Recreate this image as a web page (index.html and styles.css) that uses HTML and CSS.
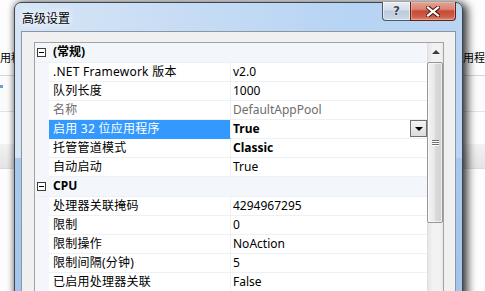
FILE: index.html
```html
<!DOCTYPE html>
<html lang="zh-CN">
<head>
<meta charset="utf-8">
<title>高级设置</title>
<link rel="stylesheet" href="styles.css">
</head>
<body>
<div class="desktop">
  <div class="bgapp">
    <div class="bg-head"><span class="bg-left">用程</span><span class="bg-right">用程</span></div>
    <div class="bg-tool"><span class="bg-dot"></span></div>
    <div class="bg-gap"></div>
    <div class="bg-band"></div>
  </div>

  <div class="window">
    <div class="titlebar">
      <span class="title">高级设置</span>
      <div class="caption">
        <div class="cbtn help"><span class="qmark">?</span></div>
        <div class="cbtn close">
          <svg width="14" height="11" viewBox="0 0 14 11">
            <path d="M2 1.5 L12 9.5 M12 1.5 L2 9.5" stroke="#4a1a12" stroke-width="4.2" stroke-linecap="square"/>
            <path d="M2 1.5 L12 9.5 M12 1.5 L2 9.5" stroke="#ffffff" stroke-width="2.2" stroke-linecap="square"/>
          </svg>
        </div>
      </div>
    </div>
    <div class="client">
      <div class="pgrid">
        <div class="rows">
          <div class="cat first"><span class="gut"><span class="box"></span></span><span class="cname">(常规)</span></div>
          <div class="row"><span class="gut"></span><span class="name">.NET Framework 版本</span><span class="val">v2.0</span></div>
          <div class="row"><span class="gut"></span><span class="name">队列长度</span><span class="val">1000</span></div>
          <div class="row ro"><span class="gut"></span><span class="name">名称</span><span class="val">DefaultAppPool</span></div>
          <div class="row sel"><span class="gut"></span><span class="name">启用 32 位应用程序</span><span class="val"><b>True</b><span class="dd"><span class="tri"></span></span></span></div>
          <div class="row"><span class="gut"></span><span class="name">托管管道模式</span><span class="val"><b>Classic</b></span></div>
          <div class="row"><span class="gut"></span><span class="name">自动启动</span><span class="val">True</span></div>
          <div class="cat"><span class="gut"><span class="box"></span></span><span class="cname">CPU</span></div>
          <div class="row"><span class="gut"></span><span class="name">处理器关联掩码</span><span class="val">4294967295</span></div>
          <div class="row"><span class="gut"></span><span class="name">限制</span><span class="val">0</span></div>
          <div class="row"><span class="gut"></span><span class="name">限制操作</span><span class="val">NoAction</span></div>
          <div class="row"><span class="gut"></span><span class="name">限制间隔(分钟)</span><span class="val">5</span></div>
          <div class="row"><span class="gut"></span><span class="name">已启用处理器关联</span><span class="val">False</span></div>
        </div>
        <div class="vscroll">
          <div class="sb-up"><span class="uptri"></span></div>
          <div class="sb-track">
            <div class="thumb"><span class="grip"></span><span class="grip"></span><span class="grip"></span></div>
          </div>
        </div>
      </div>
    </div>
  </div>
</div>
</body>
</html>
```

FILE: styles.css
```css
* { box-sizing: border-box; margin: 0; padding: 0; }
html, body { width: 485px; height: 291px; overflow: hidden; }
body {
  font-family: "Noto Sans", "Noto Sans CJK SC", sans-serif;
  font-size: 12px;
  color: #000;
  background: #fff;
}
.desktop { position: relative; width: 485px; height: 291px; overflow: hidden; background: #fdfdfd; }

/* background application */
.bgapp { display: flex; flex-direction: column; }
.bg-head {
  margin-top: 49px;
  height: 27px;
  display: flex;
  justify-content: space-between;
  align-items: flex-start;
  border-bottom: 1px solid #d5d5d5;
  line-height: 16px;
  white-space: nowrap;
  font-family: "Noto Sans CJK SC", sans-serif;
  font-size: 11px;
}
.bg-left { margin-left: 0; }
.bg-right { margin-right: 0; }
.bg-tool { height: 36px; border-bottom: 1px solid #e3e3e3; background: #fbfbfb; padding: 9px 0 0 0; }
.bg-dot { display: block; width: 3px; height: 3px; background: #6aa0d6; }
.bg-gap { height: 32px; }
.bg-band { height: 25px; background: linear-gradient(#f2f2f2, #e4e4e4); border-bottom: 1px solid #dadada; }

/* window */
.window {
  position: absolute;
  left: 14px;
  top: 2px;
  width: 449px;
  height: 320px;
  border: 1px solid #3f4852;
  border-radius: 7px 7px 0 0;
  background:
    linear-gradient(to bottom, rgba(0,0,0,0) 0, rgba(0,0,0,0) 155px, #a9c9ec 155px, #a3c5ec 100%),
    linear-gradient(to right, #d6e5f6 0%, #c8ddf4 35%, #b7d4f4 75%, #bad5f3 100%);
  box-shadow: 4px 2px 9px 1px rgba(0,0,0,0.7), -1px 0 6px rgba(0,0,0,0.3);
  display: flex;
  flex-direction: column;
}
.titlebar { height: 28px; display: flex; align-items: flex-start; flex-shrink: 0; }
.title {
  padding: 7px 0 0 7px;
  line-height: 16px;
  font-family: "Noto Sans CJK SC", sans-serif;
  font-size: 12px;
  color: #000;
  text-shadow: 0 0 6px #fff, 0 0 10px #fff;
}
.caption { margin-left: auto; margin-right: 6px; margin-top: -1px; display: flex; }
.cbtn {
  height: 19px;
  display: flex;
  align-items: center;
  justify-content: center;
  border: 1px solid #4d5966;
  border-top: none;
}
.help {
  width: 28px;
  border-right: none;
  border-radius: 0 0 0 4px;
  background: linear-gradient(#e6edf5 0%, #d2dde9 45%, #bccbdc 50%, #c9d7e7 100%);
  box-shadow: inset 0 0 0 1px rgba(255,255,255,0.55);
}
.qmark {
  font-family: "DejaVu Sans", sans-serif;
  font-weight: bold;
  font-size: 12px;
  line-height: 12px;
  color: #3f4752;
  text-shadow: 0 0 1px #fff, 0 0 2px #fff;
}
.close {
  width: 46px;
  border-color: #5f2219;
  border-radius: 0 0 4px 0;
  background: linear-gradient(#e4a294 0%, #d88676 40%, #c74a35 50%, #cd5b48 80%, #dc8a70 100%);
  box-shadow: inset 0 0 0 1px rgba(255,200,190,0.45);
}
.close svg { display: block; }

.client {
  flex: 1;
  margin: 0 6px;
  border: 1px solid #8b96a3;
  background: #f0f0f0;
  padding: 10px 11px 0 12px;
}
.pgrid {
  height: 270px;
  border: 1px solid #a3a3a3;
  background: #fff;
  display: flex;
}
.rows { width: 392px; display: flex; flex-direction: column; }
.row, .cat {
  display: flex;
  line-height: 18px;
  white-space: nowrap;
}
.gut { width: 14px; flex-shrink: 0; background: #f3f6fb; }
.row .name {
  width: 182px;
  padding-left: 4px;
  letter-spacing: 0.25px;
  border-right: 1px solid #edf0f5;
  border-bottom: 1px solid #edf0f5;
}
.row .val {
  flex: 1;
  display: flex;
  padding-left: 2px;
  border-bottom: 1px solid #edf0f5;
}
.row.ro .name, .row.ro .val { color: #6d6d6d; }
.row.sel .name { background: #3399ff; color: #fff; border-bottom-color: #3399ff; }
.row.sel .val b { flex: 1; }
.dd {
  width: 17px;
  height: 17px;
  border: 1px solid #6f6f6f;
  background: linear-gradient(#f4f4f4, #dcdcdc);
  display: flex;
  align-items: center;
  justify-content: center;
}
.tri {
  width: 0; height: 0;
  border-left: 4px solid transparent;
  border-right: 4px solid transparent;
  border-top: 4px solid #000;
}
.cat {
  background: #f3f6fb;
  height: 20px;
  border-bottom: 1px solid #edf0f5;
}
.cat .gut { display: flex; padding: 5px 0 0 2px; }
.box {
  width: 9px;
  height: 9px;
  border: 1px solid #3c3c3c;
  background: #fff;
  position: relative;
}
.box::after {
  content: "";
  position: absolute;
  left: 1px; top: 3px;
  width: 5px; height: 1px;
  background: #000;
}
.cname { padding-left: 4px; font-weight: bold; }

.vscroll {
  width: 16px;
  display: flex;
  flex-direction: column;
  background: linear-gradient(to right, #e6e6e6, #f2f2f2 30%, #f2f2f2 80%, #e9e9e9);
  border-left: 1px solid #e0e0e0;
}
.sb-up { height: 18px; display: flex; align-items: center; justify-content: center; }
.uptri {
  width: 0; height: 0;
  border-left: 4px solid transparent;
  border-right: 4px solid transparent;
  border-bottom: 4px solid #3c3c3c;
}
.sb-track { flex: 1; padding-top: 1px; }
.thumb {
  height: 161px;
  margin-left: -1px;
  border: 1px solid #979797;
  border-radius: 2px;
  background: linear-gradient(to right, #f3f3f3 0%, #e9e9e9 45%, #d9d9d9 55%, #d2d2d2 100%);
  box-shadow: inset 0 0 0 1px rgba(255,255,255,0.6);
  display: flex;
  flex-direction: column;
  align-items: center;
  justify-content: center;
  gap: 1px;
}
.grip { width: 7px; height: 1px; background: #6e6e6e; box-shadow: 0 1px 0 #fff; }
```
